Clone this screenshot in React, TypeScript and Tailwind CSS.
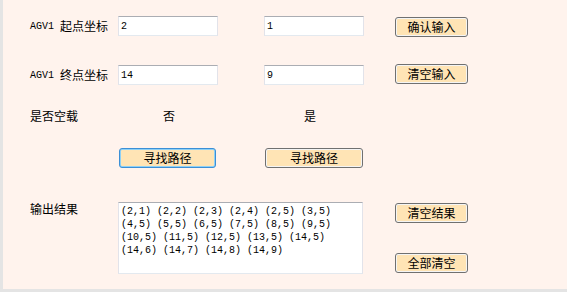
import React from "react";

const cjk = { fontFamily: '"Noto Sans CJK SC", "Liberation Sans", sans-serif' };
const mono = { fontFamily: '"Liberation Mono", "DejaVu Sans Mono", monospace' };

function Btn({ label, w = 73, focused = false }: { label: string; w?: number; focused?: boolean }) {
  return (
    <div
      className={
        "h-[20px] rounded-[3px] border p-px " +
        (focused ? "border-[#3c8fd6] bg-[#8ed0f5]" : "border-[#707070] bg-[#f4f4f4]")
      }
      style={{ width: w }}
    >
      <div className="flex h-full w-full items-center justify-center rounded-[1px] bg-[#ffe4b5] text-[12px] leading-none text-black" style={cjk}>
        {label}
      </div>
    </div>
  );
}

function Input({ value }: { value: string }) {
  return (
    <div className="flex h-[20px] w-[100px] items-center border border-[#e2e3ea] border-t-[#abadb3] border-b-[#e3e9ef] bg-white pl-[2px] text-[10px] text-black" style={mono}>
      {value}
    </div>
  );
}

function Label({ ascii, zh }: { ascii?: string; zh: string }) {
  return (
    <div className="flex items-center whitespace-pre text-black">
      {ascii && (
        <span className="text-[10px]" style={mono}>
          {ascii}
        </span>
      )}
      <span className="text-[12px] leading-none" style={cjk}>
        {zh}
      </span>
    </div>
  );
}

export default function App() {
  const lines = [
    "(2,1) (2,2) (2,3) (2,4) (2,5) (3,5)",
    "(4,5) (5,5) (6,5) (7,5) (8,5) (9,5)",
    "(10,5) (11,5) (12,5) (13,5) (14,5)",
    "(14,6) (14,7) (14,8) (14,9)",
  ];
  return (
    <div className="h-[292px] w-[567px] bg-[#e4e4e4] pb-[3px] pl-[3px]">
      <div className="flex h-[289px] w-[564px] flex-col bg-[#fff3ed]">
        {/* Row 1 */}
        <div className="mt-[16px] flex h-[21px] items-start">
          <div className="flex h-[20px] w-[115px] items-center pl-[27px]">
            <Label ascii="AGV1 " zh="起点坐标" />
          </div>
          <Input value="2" />
          <div className="ml-[46px]">
            <Input value="1" />
          </div>
          <div className="ml-[31px] mt-[1px]">
            <Btn label="确认输入" />
          </div>
        </div>
        {/* Row 2 */}
        <div className="mt-[27px] flex h-[21px] items-start">
          <div className="mt-[1px] flex h-[20px] w-[115px] items-center pl-[27px]">
            <Label ascii="AGV1 " zh="终点坐标" />
          </div>
          <div className="mt-[1px]">
            <Input value="14" />
          </div>
          <div className="ml-[46px] mt-[1px]">
            <Input value="9" />
          </div>
          <div className="ml-[31px]">
            <Btn label="清空输入" />
          </div>
        </div>
        {/* Row 3 */}
        <div className="mt-[25px] flex h-[12px] items-center">
          <div className="w-[160px] pl-[27px]">
            <Label zh="是否空载" />
          </div>
          <div className="w-[141px]">
            <Label zh="否" />
          </div>
          <Label zh="是" />
        </div>
        {/* Row 4 */}
        <div className="mt-[26px] flex h-[20px] items-start">
          <div className="ml-[116px]">
            <Btn label="寻找路径" w={97} focused />
          </div>
          <div className="ml-[49px]">
            <Btn label="寻找路径" w={98} />
          </div>
        </div>
        {/* Row 5 */}
        <div className="mt-[34px] flex items-start">
          <div className="w-[115px] pl-[27px] pt-[1px]">
            <Label zh="输出结果" />
          </div>
          <div
            className="h-[72px] w-[245px] whitespace-pre border border-[#e2e3ea] border-t-[#abadb3] border-b-[#e3e9ef] bg-white pl-[2px] pt-[2px] text-[10px] leading-[13px] text-black"
            style={mono}
          >
            {lines.join("\n")}
          </div>
          <div className="ml-[32px] mt-[1px] flex flex-col gap-[30px]">
            <Btn label="清空结果" />
            <Btn label="全部清空" />
          </div>
        </div>
      </div>
    </div>
  );
}
